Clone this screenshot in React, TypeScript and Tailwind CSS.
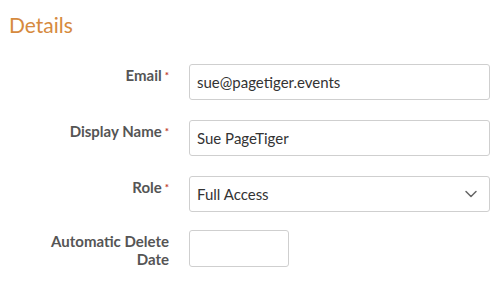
import React from "react";
import { ChevronDown } from "lucide-react";

function Label({ text, required }: { text: string; required?: boolean }) {
  return (
    <div className="w-[129px] shrink-0 text-right text-[15px] font-bold leading-[18px] text-[#555] pt-[2px]">
      {text}
      {required && <span className="ml-[3px] align-top text-[10px] text-[#c0392b]">*</span>}
    </div>
  );
}

export default function App() {
  return (
    <div className="w-[500px] h-[291px] bg-white font-['Lato',sans-serif] overflow-hidden">
      <h2 className="pl-[9px] pt-[12px] text-[21px] leading-[26px] text-[#d68a3e]">Details</h2>

      <div className="mt-[26px] pl-[40px] pr-[10px] flex flex-col gap-[20px]">
        <div className="flex gap-[20px]">
          <Label text="Email" required />
          <div className="flex-1 h-[36px] rounded-[3px] border border-[#cfcfcf] px-[7px] flex items-center text-[15px] text-[#333]">
            sue@pagetiger.events
          </div>
        </div>

        <div className="flex gap-[20px]">
          <Label text="Display Name" required />
          <div className="flex-1 h-[36px] rounded-[3px] border border-[#cfcfcf] px-[7px] flex items-center text-[15px] text-[#333]">
            Sue PageTiger
          </div>
        </div>

        <div className="flex gap-[20px]">
          <Label text="Role" required />
          <div className="flex-1 h-[36px] rounded-[3px] border border-[#cfcfcf] px-[7px] flex items-center justify-between text-[15px] text-[#333]">
            <span>Full Access</span>
            <ChevronDown size={20} strokeWidth={1.8} className="text-[#666] mr-[1px]" />
          </div>
        </div>

        <div className="flex gap-[20px] -mt-[2px]">
          <Label text="Automatic Delete Date" />
          <div className="w-[100px] h-[37px] rounded-[3px] border border-[#cfcfcf]" />
        </div>
      </div>
    </div>
  );
}
